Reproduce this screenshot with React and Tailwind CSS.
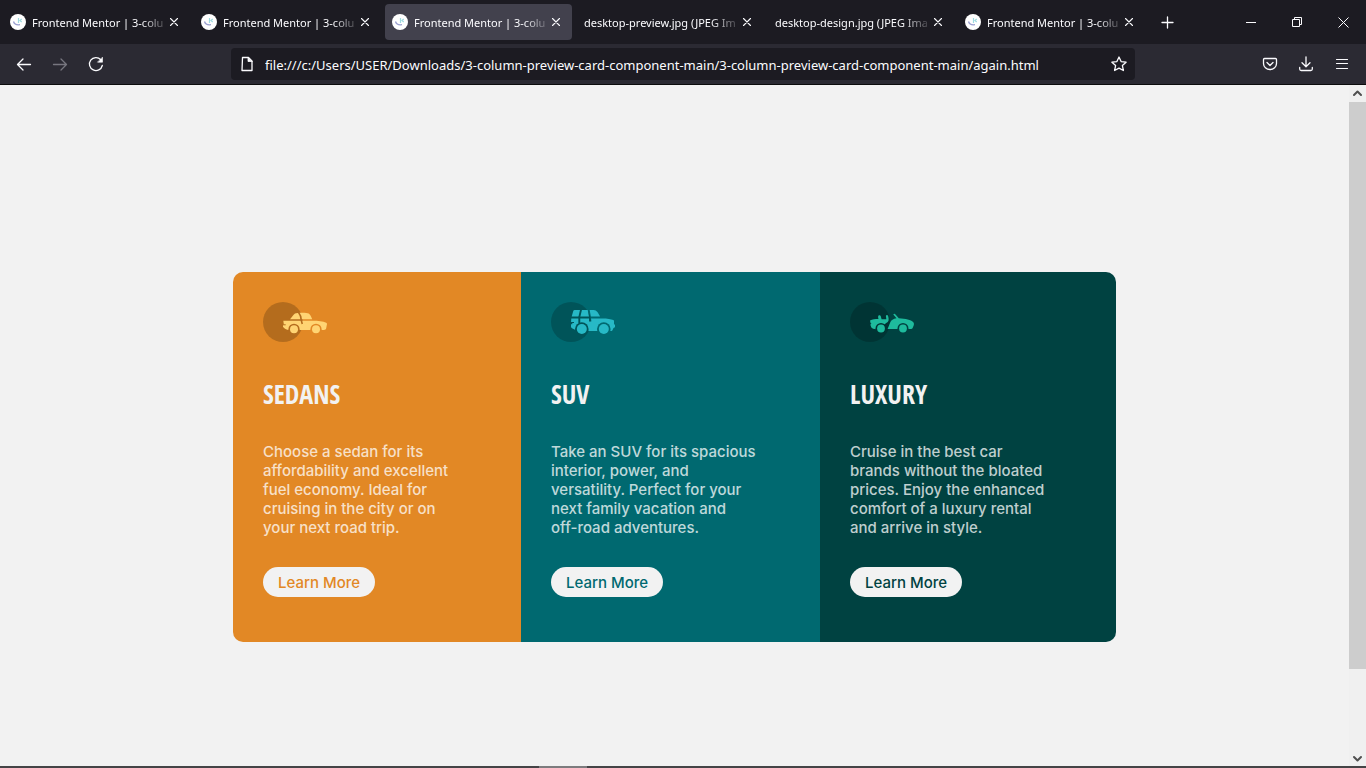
import React from "react";

const tabs = [
  { title: "Frontend Mentor | 3-colu", icon: true },
  { title: "Frontend Mentor | 3-colu", icon: true },
  { title: "Frontend Mentor | 3-colu", icon: true, active: true },
  { title: "desktop-preview.jpg (JPEG Im" },
  { title: "desktop-design.jpg (JPEG Ima" },
  { title: "Frontend Mentor | 3-colu", icon: true },
];

function SedanIcon() {
  return (
    <svg width="64" height="40" viewBox="0 0 64 40" aria-hidden="true">
      <mask id="sedan-cut">
        <rect width="64" height="40" fill="#fff" />
        <circle cx="31" cy="27.3" r="5.6" fill="#000" />
        <circle cx="53" cy="27.3" r="5.6" fill="#000" />
        <path d="M35.300 10c2 2.500 3 5 3 8.500l1 3.500" fill="none" stroke="#000" strokeWidth="1.600" />
        <path d="M20 22.800h2.700" stroke="#000" strokeWidth="1" />
      </mask>
      <circle cx="20" cy="20" r="20" fill="#000" opacity=".2" />
      <g fill="#FFD473">
        <g mask="url(#sedan-cut)">
          <path d="M27 17.200c1.800-1.500 3-4.500 5-5.700 1.600-.9 11.500-1.300 13.700 0 1.500.9 2.600 3.200 3.500 5.700z" />
          <path d="M20.300 18.700H50c5 0 10 .6 13.200 2 .9.400.9 1.400.6 2.300l-.6 3.300c-.2 1-1.100 1.700-2.200 1.700H26c-2.300 0-5-1.600-6-3.200v-1.500l.8-1z" />
        </g>
        <circle cx="31" cy="27.300" r="4" />
        <circle cx="53" cy="27.300" r="4" />
      </g>
    </svg>
  );
}

function SuvIcon() {
  return (
    <svg width="64" height="40" viewBox="0 0 64 40" aria-hidden="true">
      <mask id="suv-cut">
        <rect width="64" height="40" fill="#fff" />
        <circle cx="30.800" cy="27" r="6.800" fill="#000" />
        <circle cx="52.800" cy="27" r="6.800" fill="#000" />
        <path d="M30.200 7 28.300 15v6M37.500 7l1.500 8v3.500h1.300" fill="none" stroke="#000" strokeWidth="1.900" />
        <path d="M20 20.500h3" stroke="#000" strokeWidth="1" />
      </mask>
      <circle cx="20" cy="20" r="20" fill="#000" opacity=".2" />
      <g fill="#27B9C6">
        <g mask="url(#suv-cut)">
          <path d="m20.700 14.500 1.500-5.300c.2-.8.700-1.200 1.500-1.200h19c1.500 0 2.700.8 3.700 2 .9 1.200 2 3 2.600 4.500z" />
          <path d="M20.300 16.400h31c5 0 8.800.6 11 1.700.7.400.7 1 .7 1.600v2.600l1 .5v2c0 .8-.8 1-1.500 1.200l-.8 1.800c-.3.900-.9 1.200-1.700 1.200H38c-.6 0-1-.2-1.200-.7H25l-4-2c-.7-.4-1-.9-1-1.500v-2.600h1.300v-1.300H20z" />
        </g>
        <circle cx="30.800" cy="27" r="5" />
        <circle cx="52.800" cy="27" r="5" />
      </g>
    </svg>
  );
}

function LuxuryIcon() {
  return (
    <svg width="64" height="40" viewBox="0 0 64 40" aria-hidden="true">
      <mask id="luxury-cut">
        <rect width="64" height="40" fill="#fff" />
        <circle cx="31" cy="26.500" r="5.500" fill="#000" />
        <circle cx="53" cy="26.500" r="5.500" fill="#000" />
      </mask>
      <circle cx="20" cy="20" r="20" fill="#000" opacity=".2" />
      <g fill="#1EBB9D">
        <g mask="url(#luxury-cut)">
          <path d="M20 18.400c2.400-1.500 5-1.300 8.500-1.500-.4-1.200-.7-2.700.1-3.500.7-.6 1.900-.1 2.100.7l.9 3.200h4.600c.3-1.300-.4-2.500-.3-3.500.2-1 1.600-1.200 2-.3.500 1.400.9 2.900.7 4.500-.1 1.400-1 2.500-2.500 3.100L34 23l-7.500 4.200c-2.600 0-4.600-.7-5.300-2l-.9-2.600 1.200-.8-.9-.5z" />
          <path d="M43.300 12.400c.6-.7 1.600-.7 2.200 0l3.300 3.800c7 .3 12 1.500 14.500 4 .8.900.8 2.300.3 3.600l-1 2.200c-.3.700-1.100 1-2 1H37.600l2.600-6.500c1.100-2.500 3-3.500 6.300-4.200z" />
        </g>
        <circle cx="31" cy="26.500" r="3.900" />
        <circle cx="53" cy="26.500" r="3.900" />
      </g>
    </svg>
  );
}

const cards = [
  {
    title: "SEDANS",
    Icon: SedanIcon,
    bg: "bg-[#e28825]",
    ink: "text-[#e28825]",
    text: "Choose a sedan for its\naffordability and excellent\nfuel economy. Ideal for\ncruising in the city or on\nyour next road trip.",
  },
  {
    title: "SUV",
    Icon: SuvIcon,
    bg: "bg-[#006970]",
    ink: "text-[#006970]",
    text: "Take an SUV for its spacious\ninterior, power, and\nversatility. Perfect for your\nnext family vacation and\noff-road adventures.",
  },
  {
    title: "LUXURY",
    Icon: LuxuryIcon,
    bg: "bg-[#004241]",
    ink: "text-[#004241]",
    text: "Cruise in the best car\nbrands without the bloated\nprices. Enjoy the enhanced\ncomfort of a luxury rental\nand arrive in style.",
  },
];

function Favicon() {
  return (
    <svg className="shrink-0" width="16" height="16" viewBox="0 0 16 16" aria-hidden="true">
      <circle cx="8" cy="8" r="8" fill="#fff" />
      <path d="M3.500 7.500c.7 2.300 3 3.700 6.500 3.200" fill="none" stroke="#9a9fd0" strokeWidth="1.300" />
      <path d="M8.500 4v5M11.700 5 10 6.500 11.700 8" fill="none" stroke="#9fdbe0" strokeWidth="1.200" />
    </svg>
  );
}

function Line({ d, size = 16, width = 1.3, children }) {
  return (
    <svg width={size} height={size} viewBox={`0 0 ${size} ${size}`} fill="none" stroke="currentColor" strokeWidth={width} strokeLinecap="round" strokeLinejoin="round" aria-hidden="true">
      <path d={d} />
      {children}
    </svg>
  );
}

function Tab({ tab }) {
  return (
    <div className={`flex h-9 w-[187px] items-center rounded-sm pr-[11px] ${tab.active ? "bg-[#42414d]" : ""} ${tab.icon ? "pl-[7px]" : "pl-2"}`}>
      {tab.icon && <Favicon />}
      <button
        type="button"
        className={`min-w-0 flex-1 whitespace-nowrap pt-0.5 text-left text-[11px] leading-4 mask-r-from-80% ${tab.icon ? "ml-1.5" : ""}`}
      >
        {tab.title}
      </button>
      <button type="button" aria-label="Close tab" className="shrink-0">
        <Line size={10} width={1.1} d="M1.500 1.500l7 7M8.500 1.500l-7 7" />
      </button>
    </div>
  );
}

function ToolButton({ label, className = "", children }) {
  return (
    <button type="button" aria-label={label} className={`flex h-8 w-9 shrink-0 items-center justify-center ${className}`}>
      {children}
    </button>
  );
}

function WindowButton({ label, children }) {
  return (
    <button type="button" aria-label={label} className="flex h-11 w-[46px] items-center justify-center">
      <svg width="11" height="11" viewBox="0 0 11 11" fill="none" stroke="currentColor" aria-hidden="true">
        {children}
      </svg>
    </button>
  );
}

function Browser() {
  return (
    <header className="shrink-0 border-b border-[#0c0c0d] bg-[#2b2a33] font-['Noto_Sans',sans-serif] text-[#fbfbfe]">
      <div className="flex h-11 items-center bg-[#1c1b22] pl-[3px]">
        <div className="flex gap-1">
          {tabs.map((tab, i) => (
            <Tab key={i} tab={tab} />
          ))}
        </div>
        <button type="button" aria-label="New tab" className="ml-1 flex h-9 w-9 items-center justify-center">
          <Line size={13} d="M6.500 1v11M1 6.500h11" />
        </button>
        <div className="ml-auto flex">
          <WindowButton label="Minimize">
            <path d="M0 5.500h10" />
          </WindowButton>
          <WindowButton label="Restore">
            <path d="M.5 2.500h7v7h-7zM2.500 2.500v-2h7v7h-2" />
          </WindowButton>
          <WindowButton label="Close">
            <path d="M.5.5l10 10M10.500.5l-10 10" />
          </WindowButton>
        </div>
      </div>
      <div className="flex h-10 items-center px-1.5">
        <ToolButton label="Back">
          <Line d="M14.500 8.500H1.500M7 3 1.500 8.500 7 14" />
        </ToolButton>
        <ToolButton label="Forward" className="text-[#77767f]">
          <Line d="M1.500 8.500h13M9 3l5.500 5.500L9 14" />
        </ToolButton>
        <ToolButton label="Reload">
          <Line d="M14.300 9.500A6.500 6.500 0 1 1 12.800 3.700">
            <path d="M14.500 1.500v4.700H9.800z" fill="currentColor" strokeWidth=".6" />
          </Line>
        </ToolButton>
        <div className="mx-[117px] flex h-8 min-w-0 flex-1 items-center rounded-sm bg-[#1c1b22] pl-2 pr-2">
          <Line d="M3.500 1.500h6l3.500 3.500v9.500H3z">
            <path d="M9 1.500v4h4z" fill="currentColor" strokeWidth=".8" />
          </Line>
          <input
            aria-label="Address"
            className="ml-2.5 min-w-0 flex-1 bg-transparent pt-0.5 text-[13px] leading-5 outline-none"
            defaultValue="file:///c:/Users/USER/Downloads/3-column-preview-card-component-main/3-column-preview-card-component-main/again.html"
          />
          <button type="button" aria-label="Bookmark this page">
            <Line d="M8 1l2.100 4.600 5 .6-3.700 3.400 1 4.900L8 12.100l-4.400 2.400 1-4.900L.9 6.200l5-.6z" />
          </button>
        </div>
        <ToolButton label="Pocket">
          <Line d="M2.500 2.500h11q1 0 1 1V7.500a6.500 6 0 0 1-13 0v-4q0-1 1-1zM5 6.500l3 3 3-3" />
        </ToolButton>
        <ToolButton label="Downloads">
          <Line d="M8 .8v9.500M4 6.800l4 3.900 4-3.900M1.700 11.500v1.500q0 1.500 1.500 1.500h9.600q1.500 0 1.500-1.500v-1.500" />
        </ToolButton>
        <ToolButton label="Menu">
          <Line width={1.2} d="M2.500 3.500h11M2.500 7.500h11M2.500 12.500h11" />
        </ToolButton>
      </div>
    </header>
  );
}

function Card({ card }) {
  const { Icon } = card;
  return (
    <section className={`flex flex-col items-start px-[30px] pt-[30px] pb-[45px] ${card.bg}`}>
      <Icon />
      <h2 className="mt-8 font-['Open_Sans_Condensed','Roboto_Condensed','Liberation_Sans_Narrow',sans-serif] text-[26px] font-bold leading-10 text-[#f2f2f2]">
        {card.title}
      </h2>
      <p className="mt-7 whitespace-pre font-['Inter',sans-serif] text-[15px] font-medium leading-[19px] text-white/75">{card.text}</p>
      <button
        type="button"
        className={`mt-[30px] h-[30px] w-28 rounded-full bg-[#f2f2f2] pt-0.5 font-['Inter',sans-serif] text-[15px] font-medium leading-5 ${card.ink}`}
      >
        Learn More
      </button>
    </section>
  );
}

function Scrollbar() {
  return (
    <div className="flex w-[17px] shrink-0 flex-col items-center bg-[#f0f0f0] text-[#505050]" aria-hidden="true">
      <div className="flex h-[17px] items-center">
        <Line size={9} width={2} d="M1 6l3.500-3.500L8 6" />
      </div>
      <div className="flex w-full flex-1 flex-col">
        <div className="flex-[567] bg-[#cdcdcd]" />
        <div className="flex-[80]" />
      </div>
      <div className="flex h-[17px] items-center">
        <Line size={9} width={2} d="M1 4l3.500 3.500L8 4" />
      </div>
    </div>
  );
}

export default function App() {
  return (
    <div className="flex h-screen flex-col overflow-hidden bg-[#f2f2f2]">
      <Browser />
      <div className="flex min-h-0 flex-1">
        <main className="min-w-0 flex-1 overflow-hidden px-4 pt-[187px]">
          <div className="mx-auto grid max-w-[883px] grid-cols-[288fr_299fr_296fr] overflow-hidden rounded-[10px]">
            {cards.map((card) => (
              <Card key={card.title} card={card} />
            ))}
          </div>
        </main>
        <Scrollbar />
      </div>
      <div className="flex h-0.5 shrink-0 bg-[#454446]">
        <div className="ml-[539px] w-12 bg-[#7d7c7e]" />
      </div>
    </div>
  );
}
